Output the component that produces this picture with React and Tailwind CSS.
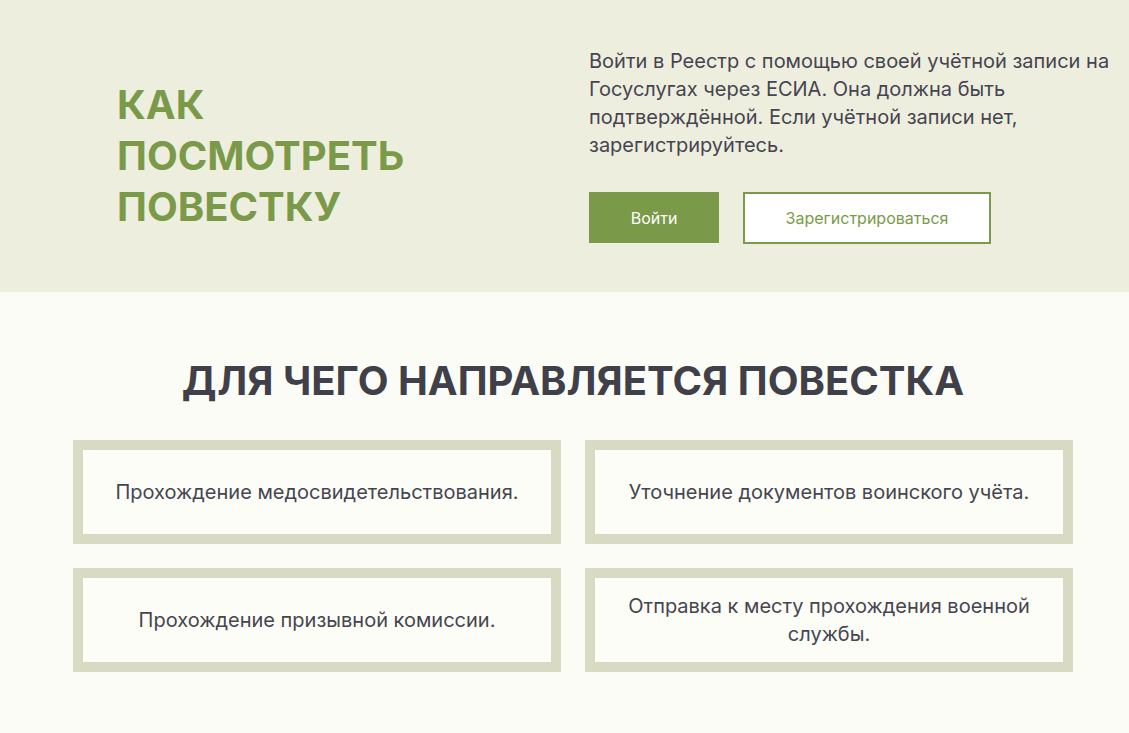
import React from 'react';

const reasons = [
  'Прохождение медосвидетельствования.',
  'Уточнение документов воинского учёта.',
  'Прохождение призывной комиссии.',
  'Отправка к месту прохождения военной службы.',
];

const App = () => {
  return (
    <div className="min-h-screen bg-[#fcfcf7] text-[#45454f]" style={{ fontFamily: 'Inter, "Noto Sans", sans-serif' }}>
      <section className="h-[292px] bg-[#eeeedf] flex items-center">
        <div className="w-[589px] pl-[117px] shrink-0">
          <h1 className="text-[40px] leading-[51px] font-bold uppercase text-[#7a9a4a] mt-[18px]">
            Как<br />посмотреть<br />повестку
          </h1>
        </div>
        <div className="w-[540px]">
          <p className="text-[20px] leading-[28px] -mt-[1px]">
            Войти в Реестр с помощью своей учётной записи на Госуслугах через ЕСИА. Она должна быть подтверждённой. Если учётной записи нет, зарегистрируйтесь.
          </p>
          <div className="flex gap-6 mt-[33px]">
            <button className="w-[130px] h-[51px] bg-[#7a9a4a] text-white text-[16px]">Войти</button>
            <button className="w-[248px] h-[52px] border-2 border-[#7a9a4a] bg-white text-[#7a9a4a] text-[16px]">
              Зарегистрироваться
            </button>
          </div>
        </div>
      </section>

      <section className="pt-[65px] pb-[60px] pl-[73px]">
        <div className="w-[1000px]">
          <h2 className="text-[40px] leading-[48px] font-bold uppercase text-center text-[#3f4049]">
            Для чего направляется повестка
          </h2>
          <div className="grid grid-cols-2 gap-6 mt-[35px]">
            {reasons.map((r) => (
              <div key={r} className="h-[104px] border-[10px] border-[#d9dac3] bg-[#fdfdf8] flex items-center justify-center px-8">
                <p className="text-[20px] leading-[28px] text-center">{r}</p>
              </div>
            ))}
          </div>
        </div>
      </section>
    </div>
  );
};

export default App;
